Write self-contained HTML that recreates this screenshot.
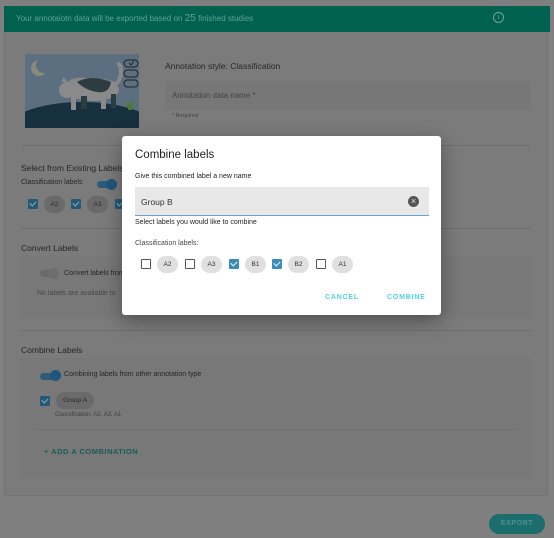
<!DOCTYPE html>
<html><head><style>
*{box-sizing:border-box;margin:0;padding:0}
html,body{background:#7f7f7f}
body{width:554px;height:538px;font-family:"Liberation Sans",sans-serif;position:relative;overflow:hidden;color:#2a2a2a}
.a{position:absolute}
.t{font-size:8px;color:#262626}
.chip{position:absolute;height:17px;border-radius:9px;background:#6a6a6a;color:#2a2a2a;font-size:6.5px;text-align:center;line-height:17px}
.cb{position:absolute;width:10px;height:10px;background:#245a78;border-radius:1px}
.cb:after{content:"";position:absolute;left:3px;top:1px;width:3px;height:5px;border:solid #9ab;border-width:0 1.5px 1.5px 0;transform:rotate(45deg)}
.dchip{position:absolute;height:17px;border-radius:9px;background:#e0e0e0;color:#333;font-size:6.5px;text-align:center;line-height:17px;width:21px;top:256px}
.dcb{position:absolute;width:10px;height:10px;border:1.5px solid #555;border-radius:1px;top:259px}
.dcb.on{background:#3d8bbb;border-color:#3d8bbb}
.dcb.on:after{content:"";position:absolute;left:2px;top:0;width:3px;height:5px;border:solid #fff;border-width:0 1.5px 1.5px 0;transform:rotate(45deg)}
</style></head><body>
<div class="a" style="left:4px;top:6px;width:546px;height:26px;background:#00614f"></div>
<div class="a" style="left:16px;top:13px;font-size:8px;color:#5fa393">Your annotaiotn data will be exported based on <b style="font-size:10px;font-weight:normal">25</b> finished studies</div>
<div class="a" style="left:493px;top:12px;width:11px;height:11px;border:1px solid #6fa89a;border-radius:50%;font-size:7px;color:#6fa89a;text-align:center;line-height:9px">i</div>
<div class="a" style="left:4px;top:32px;width:544px;height:464px;border:1px solid #737373;border-top:none;background:#7b7b7b"></div>
<!-- image -->
<svg class="a" style="left:25px;top:54px" width="114" height="74" viewBox="0 0 114 74">
<rect width="114" height="74" fill="#5c6f80"/>
<ellipse cx="57" cy="80" rx="80" ry="32" fill="#163040"/>
<circle cx="14" cy="14" r="8" fill="#8a8a7c"/><circle cx="19" cy="11" r="8" fill="#5c6f80"/>
<path d="M40 34 Q45 24 62 26 Q80 26 90 30 Q96 28 96 16 Q96 10 92 10" stroke="#888" stroke-width="4" fill="none"/>
<ellipse cx="68" cy="36" rx="26" ry="11" fill="#8a8a8a"/>
<path d="M52 28 Q66 20 86 28 Q84 40 72 38 Q60 36 52 28Z" fill="#2c3c40"/>
<circle cx="42" cy="36" r="8" fill="#8a8a8a"/>
<path d="M36 28 l3 -5 l3 5z" fill="#8a8a8a"/>
<rect x="46" y="42" width="5" height="14" fill="#8a8a8a"/><rect x="56" y="42" width="6" height="13" fill="#2c3c40"/>
<rect x="76" y="42" width="5" height="13" fill="#8a8a8a"/><rect x="86" y="40" width="5" height="14" fill="#2c3c40"/>
<rect x="99" y="6" width="14" height="7" rx="3.5" fill="none" stroke="#222"/>
<rect x="99" y="16" width="14" height="7" rx="3.5" fill="none" stroke="#222"/>
<rect x="99" y="26" width="14" height="7" rx="3.5" fill="none" stroke="#222"/>
<path d="M104 9 l2 2 l3 -4" stroke="#222" fill="none"/>
<path d="M104 56 l-2 -8 M106 56 l3 -9 M105 56 l0 -10" stroke="#4a7a2a" stroke-width="1.5"/>
</svg>
<div class="a t" style="left:165px;top:61px;font-size:8.5px">Annotation style: Classification</div>
<div class="a" style="left:165px;top:81px;width:366px;height:29px;background:#777"></div>
<div class="a" style="left:172px;top:91px;font-size:8px;color:#444">Annotation data name *</div>
<div class="a" style="left:172px;top:113px;font-size:5.5px;color:#444">* Required</div>
<div class="a" style="left:21px;top:145px;width:510px;border-top:1px solid #6f6f6f"></div>
<div class="a t" style="left:21px;top:163px;font-size:8.5px">Select from Existing Labels</div>
<div class="a t" style="left:21px;top:179px;font-size:7px">Classification labels</div>
<div class="a" style="left:97px;top:181px;width:14px;height:7px;border-radius:4px;background:#2d5b7a"></div>
<div class="a" style="left:106px;top:179px;width:11px;height:11px;border-radius:50%;background:#1f5680"></div>
<div class="cb" style="left:28px;top:199px"></div><div class="chip" style="left:44px;top:196px;width:21px">A2</div>
<div class="cb" style="left:71px;top:199px"></div><div class="chip" style="left:87px;top:196px;width:21px">A3</div>
<div class="cb" style="left:115px;top:199px"></div>
<div class="a" style="left:21px;top:228px;width:510px;border-top:1px solid #6f6f6f"></div>
<div class="a t" style="left:21px;top:243px;font-size:8.5px">Convert Labels</div>
<div class="a" style="left:21px;top:256px;width:510px;height:62px;background:#787878"></div>
<div class="a" style="left:40px;top:270px;width:16px;height:7px;border-radius:4px;background:#6a6a6a"></div>
<div class="a" style="left:48px;top:268px;width:11px;height:11px;border-radius:50%;background:#6e6e6e"></div>
<div class="a t" style="left:64px;top:270px;font-size:7px">Convert labels from</div>
<div class="a t" style="left:37px;top:290px;font-size:7px;color:#484848">No labels are available to</div>
<div class="a" style="left:21px;top:330px;width:510px;border-top:1px solid #6f6f6f"></div>
<div class="a t" style="left:21px;top:345px;font-size:8.5px">Combine Labels</div>
<div class="a" style="left:21px;top:358px;width:510px;height:120px;background:#787878"></div>
<div class="a" style="left:40px;top:373px;width:16px;height:7px;border-radius:4px;background:#2d5b7a"></div>
<div class="a" style="left:50px;top:370px;width:11px;height:11px;border-radius:50%;background:#1f5680"></div>
<div class="a t" style="left:64px;top:371px;font-size:7px">Combining labels from other annotation type</div>
<div class="cb" style="left:40px;top:396px"></div><div class="chip" style="left:56px;top:392px;width:38px">Group A</div>
<div class="a" style="left:55px;top:412px;font-size:6px;color:#404040">Classification: A2, A3, A1</div>
<div class="a" style="left:34px;top:429px;width:484px;border-top:1px solid #6f6f6f"></div>
<div class="a" style="left:44px;top:447px;font-size:7.5px;color:#185c5c;font-weight:bold;letter-spacing:.5px">+ ADD A COMBINATION</div>
<div class="a" style="left:489px;top:514px;width:56px;height:20px;border-radius:10px;background:#1c6e6e;color:#4f8f8f;font-size:7px;font-weight:bold;letter-spacing:.6px;text-align:center;line-height:20px">EXPORT</div>
<!-- dialog -->
<div class="a" style="left:122px;top:136px;width:319px;height:179px;background:#fff;border-radius:3px;box-shadow:0 6px 20px rgba(0,0,0,.35)"></div>
<div class="a" style="left:135px;top:149px;font-size:11.5px;color:#222">Combine labels</div>
<div class="a" style="left:135px;top:173px;font-size:7px;color:#222">Give this combined label a new name</div>
<div class="a" style="left:135px;top:187px;width:294px;height:29px;background:#e8e8e8;border-bottom:1px solid #6aa4d0"></div>
<div class="a" style="left:141px;top:197px;font-size:8.5px;color:#333">Group B</div>
<div class="a" style="left:408px;top:196px;width:11px;height:11px;border-radius:50%;background:#555;color:#e8e8e8;font-size:9px;line-height:11px;text-align:center">×</div>
<div class="a" style="left:135px;top:219px;font-size:7px;color:#222">Select labels you would like to combine</div>
<div class="a" style="left:135px;top:240px;font-size:7px;color:#444">Classification labels:</div>
<div class="dcb" style="left:141px"></div><div class="dchip" style="left:157px">A2</div>
<div class="dcb" style="left:185px"></div><div class="dchip" style="left:201px">A3</div>
<div class="dcb on" style="left:229px"></div><div class="dchip" style="left:245px">B1</div>
<div class="dcb on" style="left:272px"></div><div class="dchip" style="left:288px">B2</div>
<div class="dcb" style="left:316px"></div><div class="dchip" style="left:332px">A1</div>
<div class="a" style="left:325px;top:294px;font-size:7px;color:#4fd3e0;font-weight:bold;letter-spacing:.8px">CANCEL</div>
<div class="a" style="left:387px;top:294px;font-size:7px;color:#4fd3e0;font-weight:bold;letter-spacing:.8px">COMBINE</div>
</body></html>
